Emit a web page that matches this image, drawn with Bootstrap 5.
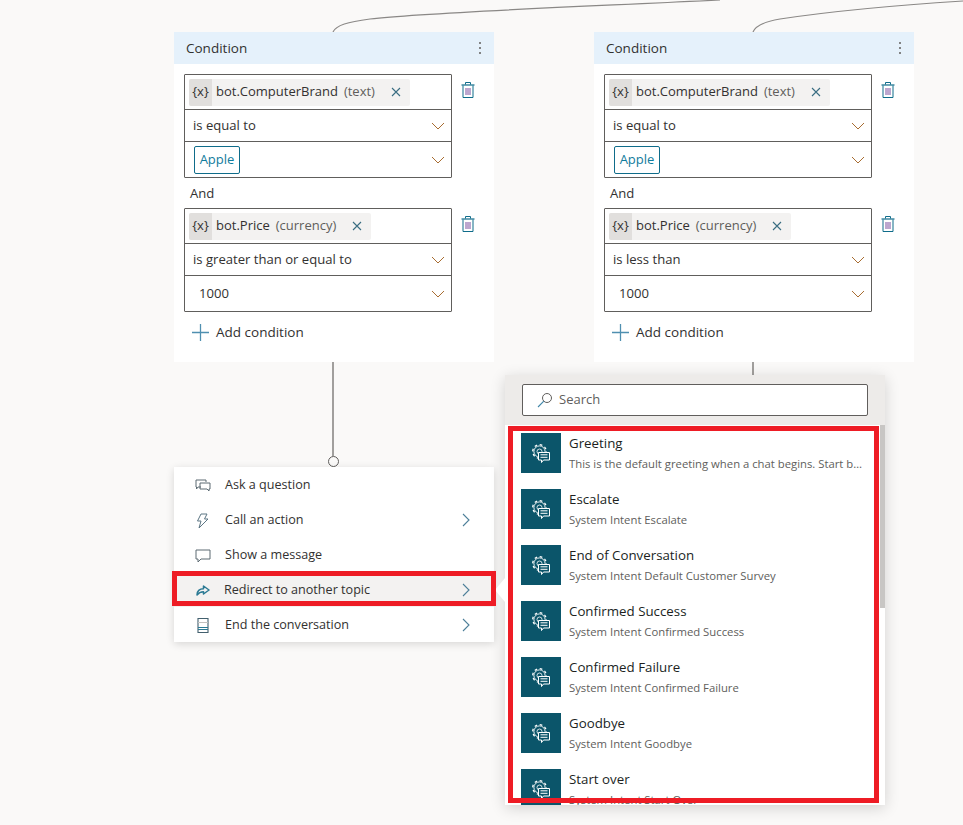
<!DOCTYPE html>
<html lang="en">
<head>
<meta charset="utf-8">
<title>Topic canvas</title>
<link rel="stylesheet" href="https://cdn.jsdelivr.net/npm/bootstrap@5.3.0/dist/css/bootstrap.min.css">
<style>
html,body{height:100%;margin:0;overflow:hidden}
body{background:#faf9f8;color:#323130;font-family:"Open Sans","Liberation Sans",sans-serif;font-size:13.1px}
.canvas-area{position:relative;width:963px;height:825px;overflow:hidden}
.wires{position:absolute;left:0;top:0}
.cond-node{position:absolute;top:32px;width:320px;height:330px;background:#fff}
.cond-a{left:174px}.cond-b{left:594px}
.cond-head{height:32px;background:#e5f1fb;padding:0 12px 0 12px;font-size:13.5px}
.cond-body{padding:10px 10px 0}
.field-box{width:268px;border:1px solid #605e5c;border-radius:1px;background:#fff}
.field-row{border-bottom:1px solid #605e5c;padding-left:8px;padding-right:6px;height:32px}
.field-row:last-child{border-bottom:0}
.row-var{height:35px;padding-left:4px}
.row-val{height:35px;padding-top:1px}
.row-val>svg{margin-top:-1px}
.var-chip{background:#f3f2f1;border-radius:2px;height:27px;font-size:13px}
.var-tag{background:#e1dfdd;width:23px;height:27px;font-size:13px;border-radius:2px 0 0 2px}
.var-type{color:#605e5c;margin-left:6px}
.var-name{margin-left:4px}
.var-x{margin:0 9px 0 16px}
.apple-pill{border:1px solid #0f6c8a;color:#0f7c9c;border-radius:2px;height:28px;width:46px;margin-left:1px;font-size:13px}
.num-val{margin-left:6px}
.trash-btn{margin:8px 0 0 9px}
.and-word{padding:7px 0 7px 6px;line-height:16px}
.add-row{padding:10px 0 0 8px;gap:7px;font-size:13.5px}
.stem{position:absolute;width:2px;background:#a19f9d}
.stem-a{left:332px;top:362px;height:94px}
.stem-b{left:752px;top:362px;height:14px}
.stem-dot{position:absolute;left:328px;top:456px;width:11px;height:11px;border:1px solid #605e5c;border-radius:50%;background:#faf9f8}
.menu-node{position:absolute;left:174px;top:467px;width:320px;background:#fff;box-shadow:0 2px 8px rgba(0,0,0,.14)}
.menu-line{height:35px;padding:2px 24px 0 20px;font-size:12.6px}
.menu-line>svg{margin-top:-2px}
.menu-line.is-on{background:#f3f2f1}
.menu-ico{width:17px;margin-right:14px}
.is-on .menu-ico{margin-right:13px}
.fly-node{position:absolute;left:505px;top:375px;width:380px;height:430px;background:#fff;box-shadow:0 3px 14px rgba(0,0,0,.16)}
.fly-head{height:50px;background:#edebe9;padding:9px 17px}
.fly-search{height:32px;background:#fff;border:1px solid #605e5c;border-radius:2px;padding-left:14px;color:#605e5c;font-size:13px;gap:6px}
.fly-list{height:380px;overflow:hidden;padding:8px 0 0 16px}
.topic-line{height:56px}
.topic-tile{width:40px;height:40px;background:#0b556a;margin-right:8px;flex:none}
.topic-name{font-size:13.3px;line-height:20px;color:#201f1e}
.topic-sub{font-size:11.3px;line-height:20px;color:#605e5c;width:298px;white-space:nowrap;overflow:hidden;text-overflow:ellipsis;margin-top:1px}
.fly-thumb{position:absolute;left:375px;top:50px;width:5px;height:183px;background:#c8c6c4}
.fly-caret{position:absolute;left:495px;top:578px;width:0;height:0;border-top:12px solid transparent;border-bottom:12px solid transparent;border-right:10px solid #fff}
.red-mark{position:absolute;border:5px solid #ee1c25;pointer-events:none}
.mark-menu{left:172px;top:571px;width:324px;height:35px}
.mark-list{left:508px;top:426px;width:371px;height:377px}
</style>
</head>
<body>
<svg width="0" height="0" class="position-absolute">
<defs>
<symbol id="i-trash" viewBox="0 0 14 16"><path d="M4.500 2.500V.5h5v2" fill="none" stroke="#0f6c8a" stroke-width="1"/><path d="M.5 3h13" fill="none" stroke="#0f6c8a" stroke-width="1.200"/><path d="M2 3.500v12h10v-12" fill="none" stroke="#0f6c8a" stroke-width="1"/><path d="M5 6v7M7 6v7M9 6v7" fill="none" stroke="#7b4f9e" stroke-width="1"/></symbol>
<symbol id="i-down" viewBox="0 0 14 8"><path d="M1 1l6 6 6-6" fill="none" stroke="#a86d32" stroke-width="1"/></symbol>
<symbol id="i-right" viewBox="0 0 8 14"><path d="M1 1l6 6-6 6" fill="none" stroke="#4d7f99" stroke-width="1.100"/></symbol>
<symbol id="i-close" viewBox="0 0 10 10"><path d="M1 1l8 8M9 1l-8 8" fill="none" stroke="#3a6d82" stroke-width="1.100"/></symbol>
<symbol id="i-plus" viewBox="0 0 16 16"><path d="M8 0v16M0 8h16" fill="none" stroke="#4f8fb0" stroke-width="1.200"/></symbol>
<symbol id="i-topic" viewBox="0 0 18 19">
<circle cx="7.500" cy="7.500" r="5.600" fill="none" stroke="#fff" stroke-width=".9"/>
<circle cx="7.500" cy="7.500" r="6.800" fill="none" stroke="#fff" stroke-width="1.300" stroke-dasharray="2.670 2.670"/>
<circle cx="7.500" cy="7.500" r="2.500" fill="none" stroke="#fff" stroke-width=".8"/>
<path d="M6.500 8.500h11v7.500h-6l-2 2.500V16h-3z" fill="#0b556a" stroke="#fff" stroke-width="1"/>
<path d="M8.500 10.800h7M8.500 13.300h7" fill="none" stroke="#fff" stroke-width="1"/>
</symbol>
<symbol id="i-ask" viewBox="0 0 16 14"><path d="M1 1h10v2M6 8H3l-1.500 2V8H1V1M5 4h10v6h-1v2l-2-2H5z" fill="none" stroke="#5c6b73" stroke-width="1"/></symbol>
<symbol id="i-bolt" viewBox="0 0 13 16"><path d="M5 1h6L8.500 6H12L3 15l2-7H1.500z" fill="none" stroke="#5c7684" stroke-width="1"/></symbol>
<symbol id="i-msg" viewBox="0 0 16 14"><path d="M1 1h14v9H6l-3 3v-3H1z" fill="none" stroke="#5c6b73" stroke-width="1"/></symbol>
<symbol id="i-redir" viewBox="0 0 14 11"><path d="M1 10C1 6 3.500 3.800 7.500 3.800V1L13 5l-5.500 4V6.800C4.500 6.800 2.500 8 1 10z" fill="none" stroke="#2b7a94" stroke-width="1.500" stroke-linejoin="round"/></symbol>
<symbol id="i-end" viewBox="0 0 12 15"><path d="M1 .5h10v14H1z" fill="none" stroke="#43606e" stroke-width="1.100"/><path d="M1 4.500h10" fill="none" stroke="#c3c1bf" stroke-width="1"/><path d="M1 9.500h10M1 11.500h10" fill="none" stroke="#2b7a94" stroke-width="1.100"/></symbol>
<symbol id="i-search" viewBox="0 0 16 16"><circle cx="10" cy="6" r="4.500" fill="none" stroke="#605e5c"/><path d="M6.800 9.200L1 15" fill="none" stroke="#3f86a8" stroke-width="1.100"/></symbol>
</defs>
</svg>

<main class="canvas-area">
<svg class="wires" width="963" height="40" viewBox="0 0 963 40">
<path d="M333 32C336 25 348 22 370 19C430 12 600 6 720 0" fill="none" stroke="#8a8886" stroke-width="1.200"/>
<path d="M753 32C756 25 768 21 780 19C840 10 900 5 963 1" fill="none" stroke="#8a8886" stroke-width="1.200"/>
</svg>

<section class="cond-node cond-a">
<div class="cond-head d-flex align-items-center justify-content-between"><span>Condition</span>
<svg width="4" height="14" viewBox="0 0 4 14"><circle cx="2" cy="2" r="1" fill="#605e5c"/><circle cx="2" cy="7" r="1" fill="#605e5c"/><circle cx="2" cy="12" r="1" fill="#605e5c"/></svg></div>
<div class="cond-body">
<div class="d-flex align-items-start">
<div class="field-box">
<div class="field-row row-var d-flex align-items-center"><div class="var-chip d-inline-flex align-items-center"><span class="var-tag d-flex align-items-center justify-content-center">{x}</span><span class="var-name">bot.ComputerBrand</span><span class="var-type">(text)</span><svg class="var-x" width="10" height="10"><use href="#i-close"/></svg></div></div>
<div class="field-row d-flex align-items-center justify-content-between"><span>is equal to</span><svg width="14" height="8"><use href="#i-down"/></svg></div>
<div class="field-row row-val d-flex align-items-center justify-content-between"><span class="apple-pill d-flex align-items-center justify-content-center">Apple</span><svg width="14" height="8"><use href="#i-down"/></svg></div>
</div>
<svg class="trash-btn" width="14" height="16"><use href="#i-trash"/></svg>
</div>
<div class="and-word">And</div>
<div class="d-flex align-items-start">
<div class="field-box">
<div class="field-row row-var d-flex align-items-center"><div class="var-chip d-inline-flex align-items-center"><span class="var-tag d-flex align-items-center justify-content-center">{x}</span><span class="var-name">bot.Price</span><span class="var-type">(currency)</span><svg class="var-x" width="10" height="10"><use href="#i-close"/></svg></div></div>
<div class="field-row d-flex align-items-center justify-content-between"><span>is greater than or equal to</span><svg width="14" height="8"><use href="#i-down"/></svg></div>
<div class="field-row row-val d-flex align-items-center justify-content-between"><span class="num-val">1000</span><svg width="14" height="8"><use href="#i-down"/></svg></div>
</div>
<svg class="trash-btn" width="14" height="16"><use href="#i-trash"/></svg>
</div>
<div class="add-row d-flex align-items-center"><svg width="17" height="17"><use href="#i-plus"/></svg><span>Add condition</span></div>
</div>
</section>

<section class="cond-node cond-b">
<div class="cond-head d-flex align-items-center justify-content-between"><span>Condition</span>
<svg width="4" height="14" viewBox="0 0 4 14"><circle cx="2" cy="2" r="1" fill="#605e5c"/><circle cx="2" cy="7" r="1" fill="#605e5c"/><circle cx="2" cy="12" r="1" fill="#605e5c"/></svg></div>
<div class="cond-body">
<div class="d-flex align-items-start">
<div class="field-box">
<div class="field-row row-var d-flex align-items-center"><div class="var-chip d-inline-flex align-items-center"><span class="var-tag d-flex align-items-center justify-content-center">{x}</span><span class="var-name">bot.ComputerBrand</span><span class="var-type">(text)</span><svg class="var-x" width="10" height="10"><use href="#i-close"/></svg></div></div>
<div class="field-row d-flex align-items-center justify-content-between"><span>is equal to</span><svg width="14" height="8"><use href="#i-down"/></svg></div>
<div class="field-row row-val d-flex align-items-center justify-content-between"><span class="apple-pill d-flex align-items-center justify-content-center">Apple</span><svg width="14" height="8"><use href="#i-down"/></svg></div>
</div>
<svg class="trash-btn" width="14" height="16"><use href="#i-trash"/></svg>
</div>
<div class="and-word">And</div>
<div class="d-flex align-items-start">
<div class="field-box">
<div class="field-row row-var d-flex align-items-center"><div class="var-chip d-inline-flex align-items-center"><span class="var-tag d-flex align-items-center justify-content-center">{x}</span><span class="var-name">bot.Price</span><span class="var-type">(currency)</span><svg class="var-x" width="10" height="10"><use href="#i-close"/></svg></div></div>
<div class="field-row d-flex align-items-center justify-content-between"><span>is less than</span><svg width="14" height="8"><use href="#i-down"/></svg></div>
<div class="field-row row-val d-flex align-items-center justify-content-between"><span class="num-val">1000</span><svg width="14" height="8"><use href="#i-down"/></svg></div>
</div>
<svg class="trash-btn" width="14" height="16"><use href="#i-trash"/></svg>
</div>
<div class="add-row d-flex align-items-center"><svg width="17" height="17"><use href="#i-plus"/></svg><span>Add condition</span></div>
</div>
</section>

<div class="stem stem-a"></div>
<div class="stem stem-b"></div>
<div class="stem-dot"></div>

<nav class="menu-node">
<div class="menu-line d-flex align-items-center"><span class="menu-ico d-flex justify-content-center"><svg width="16" height="14"><use href="#i-ask"/></svg></span>Ask a question</div>
<div class="menu-line d-flex align-items-center"><span class="menu-ico d-flex justify-content-center"><svg width="13" height="16"><use href="#i-bolt"/></svg></span>Call an action<svg class="ms-auto" width="8" height="14"><use href="#i-right"/></svg></div>
<div class="menu-line d-flex align-items-center"><span class="menu-ico d-flex justify-content-center"><svg width="16" height="14"><use href="#i-msg"/></svg></span>Show a message</div>
<div class="menu-line is-on d-flex align-items-center"><span class="menu-ico d-flex justify-content-center"><svg width="14" height="11"><use href="#i-redir"/></svg></span>Redirect to another topic<svg class="ms-auto" width="8" height="14"><use href="#i-right"/></svg></div>
<div class="menu-line d-flex align-items-center"><span class="menu-ico d-flex justify-content-center"><svg width="12" height="15"><use href="#i-end"/></svg></span>End the conversation<svg class="ms-auto" width="8" height="14"><use href="#i-right"/></svg></div>
</nav>

<aside class="fly-node">
<div class="fly-head"><div class="fly-search d-flex align-items-center"><svg width="16" height="16"><use href="#i-search"/></svg><span>Search</span></div></div>
<div class="fly-list">
<div class="topic-line d-flex"><div class="topic-tile d-flex align-items-center justify-content-center"><svg width="18" height="19"><use href="#i-topic"/></svg></div><div><div class="topic-name">Greeting</div><div class="topic-sub">This is the default greeting when a chat begins. Start by saying hello to everyone</div></div></div>
<div class="topic-line d-flex"><div class="topic-tile d-flex align-items-center justify-content-center"><svg width="18" height="19"><use href="#i-topic"/></svg></div><div><div class="topic-name">Escalate</div><div class="topic-sub">System Intent Escalate</div></div></div>
<div class="topic-line d-flex"><div class="topic-tile d-flex align-items-center justify-content-center"><svg width="18" height="19"><use href="#i-topic"/></svg></div><div><div class="topic-name">End of Conversation</div><div class="topic-sub">System Intent Default Customer Survey</div></div></div>
<div class="topic-line d-flex"><div class="topic-tile d-flex align-items-center justify-content-center"><svg width="18" height="19"><use href="#i-topic"/></svg></div><div><div class="topic-name">Confirmed Success</div><div class="topic-sub">System Intent Confirmed Success</div></div></div>
<div class="topic-line d-flex"><div class="topic-tile d-flex align-items-center justify-content-center"><svg width="18" height="19"><use href="#i-topic"/></svg></div><div><div class="topic-name">Confirmed Failure</div><div class="topic-sub">System Intent Confirmed Failure</div></div></div>
<div class="topic-line d-flex"><div class="topic-tile d-flex align-items-center justify-content-center"><svg width="18" height="19"><use href="#i-topic"/></svg></div><div><div class="topic-name">Goodbye</div><div class="topic-sub">System Intent Goodbye</div></div></div>
<div class="topic-line d-flex"><div class="topic-tile d-flex align-items-center justify-content-center"><svg width="18" height="19"><use href="#i-topic"/></svg></div><div><div class="topic-name">Start over</div><div class="topic-sub">System Intent Start Over</div></div></div>
</div>
<div class="fly-thumb"></div>
</aside>
<div class="fly-caret"></div>

<div class="red-mark mark-menu"></div>
<div class="red-mark mark-list"></div>
</main>
<script src="https://cdn.jsdelivr.net/npm/bootstrap@5.3.0/dist/js/bootstrap.bundle.min.js"></script>
</body>
</html>
